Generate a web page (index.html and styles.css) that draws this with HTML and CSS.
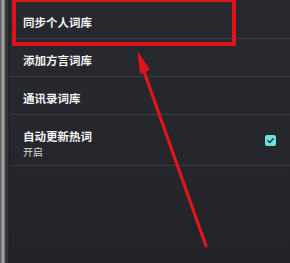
FILE: index.html
```html
<!DOCTYPE html>
<html lang="zh-CN">
<head>
    <meta charset="UTF-8">
    <title>词库设置</title>
    <link rel="stylesheet" href="styles.css">
</head>
<body>
    <div class="screen">
        <div class="bezel"></div>
        <div class="settings">
            <div class="row first">
                <span class="title">同步个人词库</span>
            </div>
            <div class="row">
                <span class="title">添加方言词库</span>
            </div>
            <div class="row">
                <span class="title">通讯录词库</span>
            </div>
            <div class="row tall">
                <div class="text">
                    <span class="title">自动更新热词</span>
                    <span class="sub">开启</span>
                </div>
                <span class="checkbox">
                    <svg width="11" height="11" viewBox="0 0 11 11">
                        <path d="M3 5.8 L4.8 7.5 L8.2 3.8" fill="none" stroke="#1d3537" stroke-width="1.5" stroke-linecap="round" stroke-linejoin="round"/>
                    </svg>
                </span>
            </div>
        </div>

        <!-- annotation overlays -->
        <div class="highlight"></div>
        <svg class="arrow" width="290" height="263" viewBox="0 0 290 263">
            <line x1="206" y1="246" x2="142" y2="66" stroke="#e3131b" stroke-width="3.2" stroke-linecap="round"/>
            <polygon points="137.5,51 150,70 140,74" fill="#e3131b"/>
        </svg>
    </div>
</body>
</html>
```

FILE: styles.css
```css
body {
    margin: 0;
    background-color: #222327;
    font-family: "Noto Sans CJK SC", "Noto Sans", sans-serif;
    color: #f2f2f2;
}
.screen {
    position: relative;
    display: flex;
    width: 290px;
    height: 263px;
    overflow: hidden;
}
.bezel {
    width: 10px;
    flex-shrink: 0;
    background: linear-gradient(to right, #4a4a4c 0, #9c9c9e 2px, #a5a5a7 4px, #47474a 5px, #2a2a2d 8px, #1d1d20 10px);
}
.settings {
    flex: 1;
    background: linear-gradient(to bottom, #28292e 0, #25262b 60%, #222327 100%);
}
.row {
    display: flex;
    align-items: center;
    justify-content: space-between;
    height: 38px;
    padding: 6px 14px 0 13px;
    box-sizing: border-box;
    border-bottom: 1px solid #3b3c42;
}
.row.first {
    height: 39px;
}
.row.tall {
    height: 51px;
}
.text {
    display: flex;
    flex-direction: column;
    gap: 3px;
}
.title {
    font-size: 11.5px;
    line-height: 13px;
    font-weight: 700;
    color: #f4f4f4;
}
.sub {
    font-size: 10px;
    line-height: 11px;
    color: #dadada;
}
.checkbox {
    display: flex;
    width: 11px;
    height: 11px;
    margin-top: -6px;
    background-color: #6ee0d9;
    border-radius: 2px;
}
.highlight {
    position: absolute;
    left: 12px;
    top: -2px;
    width: 216px;
    height: 40px;
    border: 4px solid #e0131b;
}
.arrow {
    position: absolute;
    left: 0;
    top: 0;
}
```
